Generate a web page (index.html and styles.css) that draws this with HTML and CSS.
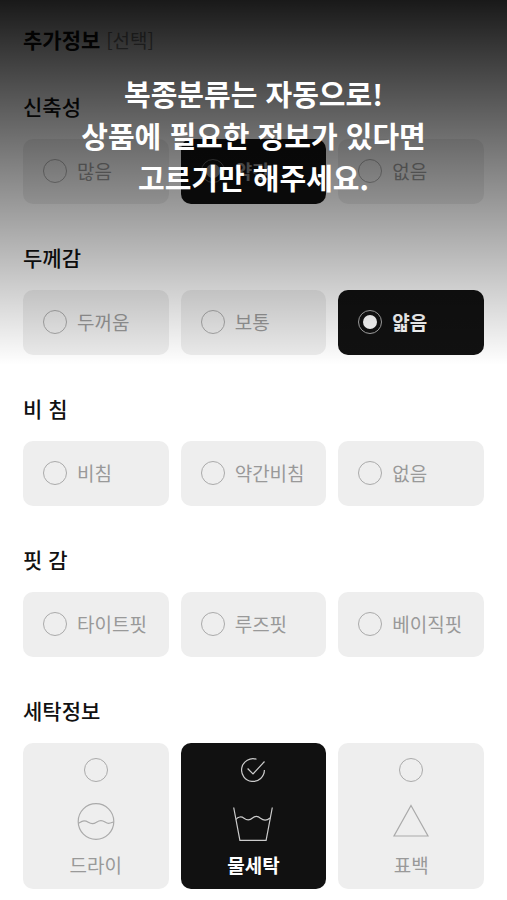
FILE: index.html
```html
<!DOCTYPE html>
<html lang="ko">
<head>
<meta charset="utf-8">
<meta name="viewport" content="width=device-width, initial-scale=1">
<title>추가정보</title>
<link rel="stylesheet" href="styles.css">
</head>
<body>
<main class="page">
  <h1 class="page-title">추가정보 <span class="optional">[선택]</span></h1>
  <form class="groups">
    <fieldset class="group">
      <legend class="group-title">신축성</legend>
      <div class="options">
        <label class="option"><input class="mark" type="radio" name="stretch"><span>많음</span></label>
        <label class="option muted"><input class="mark" type="radio" name="stretch" checked><span>약간</span></label>
        <label class="option"><input class="mark" type="radio" name="stretch"><span>없음</span></label>
      </div>
    </fieldset>
    <fieldset class="group">
      <legend class="group-title">두께감</legend>
      <div class="options">
        <label class="option"><input class="mark" type="radio" name="thickness"><span>두꺼움</span></label>
        <label class="option"><input class="mark" type="radio" name="thickness"><span>보통</span></label>
        <label class="option"><input class="mark" type="radio" name="thickness" checked><span>얇음</span></label>
      </div>
    </fieldset>
    <fieldset class="group">
      <legend class="group-title">비 침</legend>
      <div class="options">
        <label class="option"><input class="mark" type="radio" name="sheer"><span>비침</span></label>
        <label class="option"><input class="mark" type="radio" name="sheer"><span>약간비침</span></label>
        <label class="option"><input class="mark" type="radio" name="sheer"><span>없음</span></label>
      </div>
    </fieldset>
    <fieldset class="group">
      <legend class="group-title">핏 감</legend>
      <div class="options">
        <label class="option"><input class="mark" type="radio" name="fit"><span>타이트핏</span></label>
        <label class="option"><input class="mark" type="radio" name="fit"><span>루즈핏</span></label>
        <label class="option"><input class="mark" type="radio" name="fit"><span>베이직핏</span></label>
      </div>
    </fieldset>
    <fieldset class="group">
      <legend class="group-title">세탁정보</legend>
      <div class="options">
        <label class="option care">
          <input class="mark" type="checkbox" name="care">
          <svg class="care-icon" viewBox="0 0 40 40" aria-hidden="true">
            <circle cx="20" cy="20.500" r="17.8"/>
            <path d="M2.400 22.300C4 21.700 5 20 8 19.900C12 19.800 12.500 22.600 16.500 22.600C20 22.600 21 19.600 25 19.600C28.500 19.600 29.500 22.300 32.500 22.300C34.500 22.300 36 21.500 37.600 20.900"/>
          </svg>
          <span>드라이</span>
        </label>
        <label class="option care">
          <span class="check-slot">
            <input class="mark" type="checkbox" name="care" checked>
            <svg class="check-icon" viewBox="0 0 24 24" aria-hidden="true">
              <path d="M15.500 1.200A11.400 11.400 0 1 0 23.400 12"/>
              <path d="M6.600 10.500L12 16L23.500 3.500"/>
            </svg>
          </span>
          <svg class="care-icon" viewBox="0 0 40 40" aria-hidden="true">
            <path d="M.7 6.500L6.900 39.300H33.100L39.300 6.500"/>
            <path d="M3 18.500C5 15.500 8.500 15.300 11 17.200C14 19.500 17 19.300 19.500 17C22 15 25 15 27.500 17.200C30.500 19.600 34 19.500 37 17"/>
          </svg>
          <span>물세탁</span>
        </label>
        <label class="option care">
          <input class="mark" type="checkbox" name="care">
          <svg class="care-icon" viewBox="0 0 40 40" aria-hidden="true">
            <path d="M20 4.500L37 35H3Z"/>
          </svg>
          <span>표백</span>
        </label>
      </div>
    </fieldset>
  </form>
  <div class="shade">
    <p class="message">복종분류는 자동으로!<br>상품에 필요한 정보가 있다면<br>고르기만 해주세요.</p>
  </div>
</main>
</body>
</html>
```
FILE: styles.css
```css
* {
  box-sizing: border-box;
}

body {
  margin: 0;
  background: #fff;
  color: #111;
  font-family: "Noto Sans CJK KR", "Noto Sans", sans-serif;
}

.page {
  position: relative;
  padding: 23px 23px 11px;
}

.page-title,
.group-title {
  margin: 0;
  padding: 0;
  font-size: 21px;
  line-height: 32px;
  font-weight: 500;
}

.page-title {
  margin-bottom: 34px;
  font-weight: 700;
}

.optional {
  color: #888;
  font-size: 19px;
  font-weight: 400;
}

.groups {
  display: flex;
  flex-direction: column;
  gap: 37px;
}

.group {
  min-width: 0;
  margin: 0;
  padding: 0;
  border: 0;
}

.options {
  display: grid;
  grid-template-columns: repeat(3, 1fr);
  gap: 12px;
  margin-top: 17px;
}

.option {
  display: flex;
  align-items: center;
  gap: 10px;
  padding: 18px 20px 19px;
  border-radius: 10px;
  background: #eee;
  color: #999;
  font-size: 19px;
  line-height: 28px;
  white-space: nowrap;
}

.option:has(:checked) {
  background: #111;
  color: #fff;
  font-weight: 700;
}

.mark {
  appearance: none;
  flex: none;
  width: 24px;
  height: 24px;
  margin: 0;
  border: 1px solid #aaa;
  border-radius: 50%;
}

.mark[type="radio"]:checked {
  padding: 4px;
  background: #fff content-box;
  background-clip: content-box;
}

.muted > * {
  opacity: 0.5;
}

.care {
  flex-direction: column;
  padding: 15px 10px 10px;
}

.care-icon {
  width: 40px;
  height: 40px;
  margin-top: 9px;
  fill: none;
  stroke: #aaa;
  stroke-width: 1.2;
}

.care:has(:checked) .care-icon {
  stroke: #ccc;
}

.check-slot {
  display: grid;
}

.check-slot > * {
  grid-area: 1 / 1;
}

.check-slot .mark:checked {
  border-color: transparent;
}

.check-icon {
  width: 24px;
  height: 24px;
  fill: none;
  stroke: #ccc;
  stroke-width: 1.2;
  pointer-events: none;
}

.shade {
  position: absolute;
  top: 0;
  left: 0;
  right: 0;
  height: 365px;
  padding-top: 72px;
  background: linear-gradient(rgb(0 0 0 / 90%), rgb(0 0 0 / 0%));
  pointer-events: none;
}

.message {
  margin: 0;
  color: #fff;
  font-size: 29px;
  line-height: 42px;
  font-weight: 700;
  text-align: center;
}
```
